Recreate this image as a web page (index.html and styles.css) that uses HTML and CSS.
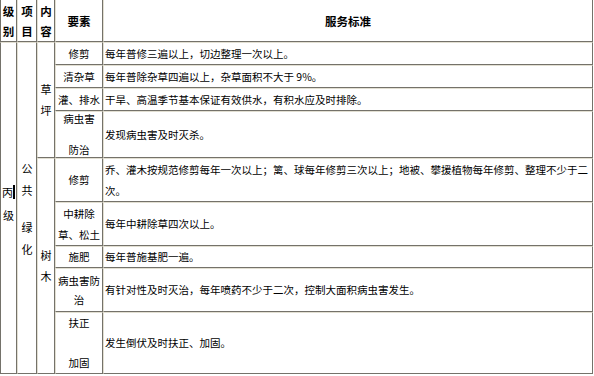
FILE: index.html
```html
<!DOCTYPE html>
<html lang="zh-CN">
<head>
<meta charset="utf-8">
<title>服务标准</title>
<link rel="stylesheet" href="styles.css">
</head>
<body>
<table class="grid">
  <colgroup>
    <col class="c1"><col class="c2"><col class="c3"><col class="c4"><col class="c5">
  </colgroup>
  <tr class="h42">
    <th class="first stack20">级<br>别</th>
    <th class="stack20">项<br>目</th>
    <th class="stack20">内<br>容</th>
    <th>要素</th>
    <th>服务标准</th>
  </tr>
  <tr class="h23">
    <td rowspan="9" class="first vcenter lvl">丙<span class="caret"></span><br>级</td>
    <td rowspan="9" class="vcenter proj"><span class="blk">公<br>共</span><span class="blk gap15">绿<br>化</span></td>
    <td rowspan="4" class="vcenter stack22">草<br>坪</td>
    <td class="el">修剪</td>
    <td class="std">每年普修三遍以上，切边整理一次以上。</td>
  </tr>
  <tr class="h23">
    <td class="el">清杂草</td>
    <td class="std">每年普除杂草四遍以上，杂草面积不大于 9%。</td>
  </tr>
  <tr class="h23">
    <td class="el">灌、排水</td>
    <td class="std">干旱、高温季节基本保证有效供水，有积水应及时排除。</td>
  </tr>
  <tr class="h47">
    <td class="el"><span class="ln14">病虫害</span><span class="ln14 gap17">防治</span></td>
    <td class="std">发现病虫害及时灭杀。</td>
  </tr>
  <tr class="h44">
    <td rowspan="5" class="vcenter stack22">树<br>木</td>
    <td class="el">修剪</td>
    <td class="std stack21">乔、灌木按规范修剪每年一次以上；篱、球每年修剪三次以上；地被、攀援植物每年修剪、整理不少于二<br>次。</td>
  </tr>
  <tr class="h44">
    <td class="el stack21">中耕除<br>草、松土</td>
    <td class="std">每年中耕除草四次以上。</td>
  </tr>
  <tr class="h22">
    <td class="el">施肥</td>
    <td class="std">每年普施基肥一遍。</td>
  </tr>
  <tr class="h44">
    <td class="el stack19">病虫害防<br>治</td>
    <td class="std">有针对性及时灭治，每年喷药不少于二次，控制大面积病虫害发生。</td>
  </tr>
  <tr class="h62 last">
    <td class="el"><span class="ln14">扶正</span><span class="ln14 gap26">加固</span></td>
    <td class="std">发生倒伏及时扶正、加固。</td>
  </tr>
</table>
</body>
</html>
```

FILE: styles.css
```css
html, body {
  margin: 0;
  padding: 0;
  background: #ffffff;
}

body {
  font-family: "Noto Sans CJK SC", "Noto Sans", sans-serif;
  font-size: 10.5px;
  color: #000000;
}

.grid {
  border-collapse: separate;
  border-spacing: 0;
  table-layout: fixed;
  width: 593px;
}

.c1 { width: 17px; }
.c2 { width: 20px; }
.c3 { width: 18px; }
.c4 { width: 48px; }
.c5 { width: 490px; }

.grid th,
.grid td {
  border-top: 1px solid #e2dfd2;
  border-left: 1px solid #e2dfd2;
  border-bottom: 1px solid #74726a;
  border-right: 1px solid #74726a;
  padding: 0 1px;
  vertical-align: middle;
  line-height: 14px;
  white-space: nowrap;
  overflow: hidden;
}

.grid th {
  border-top: none;
  font-weight: bold;
  font-size: 11.5px;
  text-align: center;
}

.grid .first {
  border-left: 1px solid #74726a;
}

.h42 { height: 42px; }
.h23 { height: 23px; }
.h22 { height: 22px; }
.h44 { height: 44px; }
.h47 { height: 47px; }
.h62 { height: 62px; }

.grid .vcenter {
  text-align: center;
  padding: 0;
}

.grid .lvl {
  line-height: 23px;
  padding-bottom: 9px;
  font-size: 11px;
}

.caret {
  display: inline-block;
  width: 2px;
  height: 14px;
  background: #000000;
  vertical-align: -2px;
}

.grid .proj {
  line-height: 22px;
  font-size: 11px;
}

.blk {
  display: block;
}

.gap15 { margin-top: 15px; }
.gap17 { margin-top: 17px; }
.gap26 { margin-top: 26px; }

.ln14 {
  display: block;
  line-height: 14px;
}

.grid .stack19 { line-height: 19px; }
.grid .stack20 { line-height: 20px; }
.grid .stack21 { line-height: 21px; }
.grid .stack22 { line-height: 21px; font-size: 11px; }

.grid .el {
  text-align: center;
}

.grid .std {
  text-align: left;
  padding-left: 1px;
}
```
